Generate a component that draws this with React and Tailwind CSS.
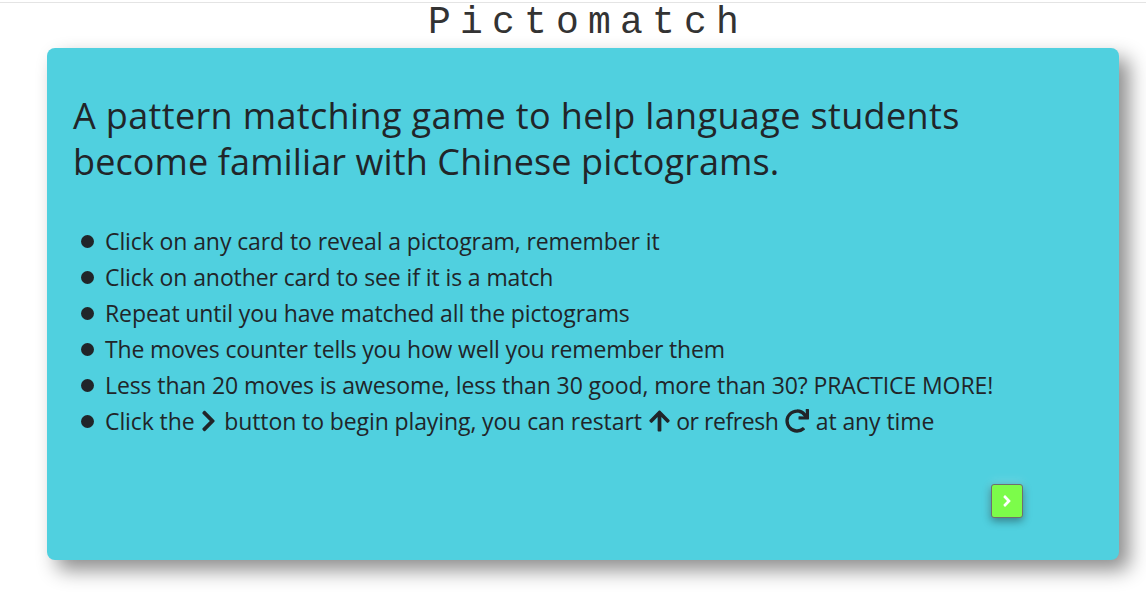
import { FaAngleRight, FaArrowUp, FaChevronRight, FaRedo } from "react-icons/fa";

const sans = "font-['Open_Sans','Noto_Sans',sans-serif]";

function Rule({ children, tight }) {
  return (
    <li className="flex h-9 items-center">
      <span className="ml-[8px] mr-[11px] h-[13px] w-[13px] shrink-0 rounded-full bg-[#212529]" />
      <span
        className={`flex items-center whitespace-pre text-[23px] ${
          tight ? "tracking-[-0.17px]" : "tracking-[-0.1px]"
        }`}
      >
        {children}
      </span>
    </li>
  );
}

export default function App() {
  return (
    <div className={`h-[616px] w-[1146px] overflow-hidden bg-white text-[#212529] ${sans}`}>
      <div className="mt-[2px] h-px bg-[#e4e4e4]" />

      <h1 className="h-[45px] pl-[30px] pt-[1px] text-center font-['Liberation_Mono',monospace] text-[38px] font-normal leading-[38px] tracking-[9.2px] text-[#333]">
        Pictomatch
      </h1>

      <main className="ml-[47px] flex h-[512px] w-[1072px] flex-col rounded-lg bg-[#50d0df] pl-[26px] pr-[96px] pt-[45px] shadow-[10px_10px_20px_rgba(0,0,0,0.45)]">
        <h2 className="whitespace-nowrap text-[36px] font-normal leading-[46px] tracking-[0.36px]">
          A pattern matching game to help language students
          <br />
          <span className="tracking-[0.11px]">become familiar with Chinese pictograms.</span>
        </h2>

        <ul className="mt-[38px]">
          <Rule>Click on any card to reveal a pictogram, remember it</Rule>
          <Rule>Click on another card to see if it is a match</Rule>
          <Rule>Repeat until you have matched all the pictograms</Rule>
          <Rule tight>The moves counter tells you how well you remember them</Rule>
          <Rule>Less than 20 moves is awesome, less than 30 good, more than 30? PRACTICE MORE!</Rule>
          <Rule>
            Click the <FaChevronRight className="ml-[1px] mr-[2px] h-[24px] w-[15px]" /> button to begin playing, you can restart{" "}
            <FaArrowUp className="mx-[1px] h-[24px] w-[21px]" />
            <span className="tracking-[-0.45px]"> or refresh </span>
            <FaRedo className="mx-[1px] h-[24px] w-[24px]" /> at any time
          </Rule>
        </ul>

        <div className="mt-[45px] flex justify-end">
          <button className="flex h-[34px] w-[32px] items-center justify-center rounded-[3px] border border-[#6f6f6f] bg-[#7cfc4a] text-white shadow-[0_3px_8px_rgba(0,0,0,0.4),0_-3px_10px_rgba(255,255,255,0.2)]">
            <FaAngleRight className="h-[18px] w-[18px]" />
          </button>
        </div>
      </main>
    </div>
  );
}
